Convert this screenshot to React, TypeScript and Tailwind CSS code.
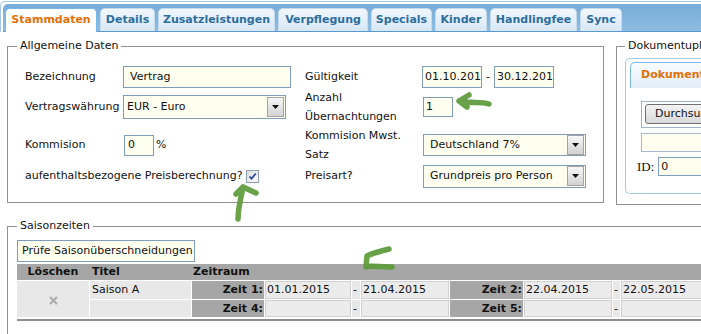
import React from 'react'

const tabs = [
  { label: 'Stammdaten', w: 'w-[92px]', active: true },
  { label: 'Details', w: 'w-[55px]' },
  { label: 'Zusatzleistungen', w: 'w-[117px]' },
  { label: 'Verpflegung', w: 'w-[90px]' },
  { label: 'Specials', w: 'w-[61px]' },
  { label: 'Kinder', w: 'w-[52px]' },
  { label: 'Handlingfee', w: 'w-[87px]' },
  { label: 'Sync', w: 'w-[42px]' },
]

function Arrow() {
  return (
    <span className="mr-px flex h-[20px] w-[17px] items-center justify-center border border-[#a3a3a3] bg-gradient-to-b from-[#f7f7f7] to-[#d3d3d3]">
      <svg width="7" height="4" viewBox="0 0 7 4">
        <path d="M0 0h7L3.5 4z" fill="#111" />
      </svg>
    </span>
  )
}

function Select({ value, className, pad }: { value: string; className: string; pad: string }) {
  return (
    <div className={`flex items-center border border-[#7f9db9] bg-[#fffff0] ${className}`}>
      <span className={`flex-1 truncate ${pad}`}>{value}</span>
      <Arrow />
    </div>
  )
}

function Input({ value, className, pad = 'pl-[2px]' }: { value?: string; className: string; pad?: string }) {
  return (
    <div className={`flex items-center border border-[#7f9db9] bg-[#fffff0] ${pad} ${className}`}>
      {value}
    </div>
  )
}

function DateCell({ value }: { value?: string }) {
  return <div className="border border-[#d0d0d0] bg-[#ebebeb] pl-px leading-[15px]">{value}</div>
}

function Dash() {
  return <div className="bg-[#e8e8e8] pl-px leading-[17px]">-</div>
}

function ZeitLabel({ label }: { label: string }) {
  return <div className="bg-[#a6a6a6] pr-px text-right font-bold leading-[17px]">{label}</div>
}

export default function App() {
  return (
    <div className="relative h-[334px] w-[701px] overflow-hidden bg-white font-['DejaVu_Sans',sans-serif] text-[11px] text-[#111]">
      {/* tab widget */}
      <div className="mt-px w-[720px] rounded-tl-[5px] border-l border-t border-[#a6c9e2] px-[2px] pt-[2px]">
        <div className="flex h-[28px] items-end gap-[3px] rounded-tl-[5px] border-b border-[#5b98cf] bg-gradient-to-b from-[#78acd9] to-[#8fbce1] pl-[2px]">
          {tabs.map((t) => (
            <div
              key={t.label}
              className={`flex items-center justify-center rounded-t-[5px] border border-b-0 font-bold ${t.w} ${
                t.active
                  ? '-mb-px h-[24px] border-[#79b7e7] bg-white text-[#e17009]'
                  : 'h-[23px] border-[#c5dbec] bg-gradient-to-b from-[#f1f7fd] to-[#d7e7f6] text-[#2e6e9e]'
              }`}
            >
              {t.label}
            </div>
          ))}
        </div>
      </div>

      {/* top row */}
      <div className="mt-[6px] flex items-start pl-[7px]">
        <fieldset className="w-[597px] shrink-0 border border-[#919191] pb-[14px] pl-[9px] pt-[12px]">
          <legend className="px-[3px] leading-[16px]">Allgemeine Daten</legend>
          <div className="ml-[8px] grid grid-cols-[98px_182px_117px_180px] grid-rows-[22px_38px_38px_24px] items-center">
            <div>Bezeichnung</div>
            <Input value="Vertrag" className="h-[22px] w-[168px]" pad="pl-[6px]" />
            <div>Gültigkeit</div>
            <div className="flex items-center">
              <Input value="01.10.201" className="h-[22px] w-[60px]" />
              <span className="mx-[4px]">-</span>
              <Input value="30.12.201" className="h-[22px] w-[60px]" />
            </div>

            <div>Vertragswährung</div>
            <Select value="EUR - Euro" className="h-[24px] w-[163px]" pad="pl-[3px]" />
            <div className="leading-[19px]">
              Anzahl
              <br />
              Übernachtungen
            </div>
            <Input value="1" className="ml-px h-[20px] w-[30px]" />

            <div>Kommision</div>
            <div className="flex items-center">
              <Input value="0" className="ml-px h-[21px] w-[30px] pl-[3px]" />
              <span className="ml-[2px]">%</span>
            </div>
            <div className="leading-[19px]">
              Kommision Mwst.
              <br />
              Satz
            </div>
            <Select value="Deutschland 7%" className="ml-px h-[22px] w-[163px]" pad="pl-[6px]" />

            <div className="col-span-2 flex items-center">
              <span>aufenthaltsbezogene Preisberechnung?</span>
              <span className="ml-[3px] flex h-[13px] w-[13px] items-center justify-center border border-[#8e9db0] bg-gradient-to-br from-[#dcdcdc] to-[#fbfbfb]">
                <svg width="9" height="9" viewBox="0 0 9 9">
                  <path d="M1.5 4.5l2 2.2L7.8 1.5" fill="none" stroke="#2c4a9a" strokeWidth="1.8" />
                </svg>
              </span>
            </div>
            <div>Preisart?</div>
            <Select value="Grundpreis pro Person" className="ml-px h-[23px] w-[163px]" pad="pl-[6px]" />
          </div>
        </fieldset>

        <fieldset className="ml-[12px] w-[120px] shrink-0 border border-[#919191] pb-[10px] pl-[8px] pt-[4px]">
          <legend className="px-[3px] leading-[16px] whitespace-nowrap">Dokumentupload</legend>
          <div className="h-[136px] w-[140px] rounded-l-[5px] border border-r-0 border-[#a6c9e2] p-[3px]">
            <div className="ml-px flex h-[26px] w-[110px] items-center rounded-t-[5px] border border-b-0 border-[#79b7e7] bg-gradient-to-b from-[#f7fbfe] to-[#e3eef9] pl-[10px] font-bold text-[#e17009]">
              Dokumente
            </div>
            <div className="ml-[12px] mt-[13px] h-[27px] border border-r-0 border-[#9fb3c7] pl-[3px] pt-[2px]">
              <div className="flex h-[20px] w-[90px] items-center rounded-[3px] border border-[#707070] bg-gradient-to-b from-[#f4f4f4] to-[#d9d9d9] pl-[9px] text-[#111]">
                Durchsuchen...
              </div>
            </div>
            <div className="ml-[12px] mt-[5px] h-[19px] border border-r-0 border-[#a5b8cc] bg-[#fffff0]" />
            <div className="ml-[8px] mt-[5px] flex items-center">
              <span className="font-['Liberation_Serif',serif] text-[13px]">ID:</span>
              <Input value="0" className="ml-[4px] h-[19px] w-[80px]" />
            </div>
          </div>
        </fieldset>
      </div>

      {/* Saisonzeiten */}
      <fieldset className="ml-[7px] mt-[13px] w-[760px] border border-[#919191] pb-[30px] pl-[9px] pt-[6px]">
        <legend className="px-[3px] leading-[16px]">Saisonzeiten</legend>
        <div className="flex h-[22px] w-[178px] items-center border border-[#7f9db9] bg-[#fffff0] pl-[4px]">
          Prüfe Saisonüberschneidungen
        </div>
        <div className="mt-[2px] grid h-[16px] grid-cols-[72px_101px_72px_86px_8px_88px_73px_88px_7px_120px] gap-x-px bg-[#a6a6a6] font-bold leading-[16px]">
          <div className="text-center">Löschen</div>
          <div className="pl-[2px]">Titel</div>
          <div className="col-span-8 pl-px">Zeitraum</div>
        </div>
        <div className="mt-px grid grid-cols-[72px_101px_72px_86px_8px_88px_73px_88px_7px_120px] grid-rows-[18px_17px] gap-px bg-white">
          <div className="row-span-2 flex items-center justify-center bg-[#e8e8e8] pt-[2px]">
            <svg width="9" height="9" viewBox="0 0 9 9">
              <path d="M1 1l7 7M8 1l-7 7" stroke="#a9a9a9" strokeWidth="1.8" />
            </svg>
          </div>
          <div className="bg-[#e8e8e8] pl-[2px] leading-[17px]">Saison A</div>
          <ZeitLabel label="Zeit 1:" />
          <DateCell value="01.01.2015" />
          <Dash />
          <DateCell value="21.04.2015" />
          <ZeitLabel label="Zeit 2:" />
          <DateCell value="22.04.2015" />
          <Dash />
          <DateCell value="22.05.2015" />

          <div className="bg-[#e8e8e8]" />
          <ZeitLabel label="Zeit 4:" />
          <DateCell />
          <Dash />
          <DateCell />
          <ZeitLabel label="Zeit 5:" />
          <DateCell />
          <Dash />
          <DateCell />
        </div>
        <div className="mt-[2px] h-[2px] bg-[#8d8d8d]" />
      </fieldset>

      {/* green hand-drawn arrows */}
      <svg className="pointer-events-none absolute left-0 top-0 blur-[0.5px]" width="701" height="334" viewBox="0 0 701 334">
        <g fill="none" stroke="#5c9a3a" strokeWidth="5.5" strokeLinecap="round" strokeLinejoin="round" opacity="0.92">
          <path d="M489 104C480 101 471 104 459 101M459 101L469 95M459 101L467 107" />
          <path d="M243 187C241 198 238 208 238 219M243 187L236 194M243 187L256 193" />
          <path d="M389 249C381 251 373 253 367 256L366 267M366 266C375 266 384 267 392 267" />
        </g>
      </svg>
    </div>
  )
}
